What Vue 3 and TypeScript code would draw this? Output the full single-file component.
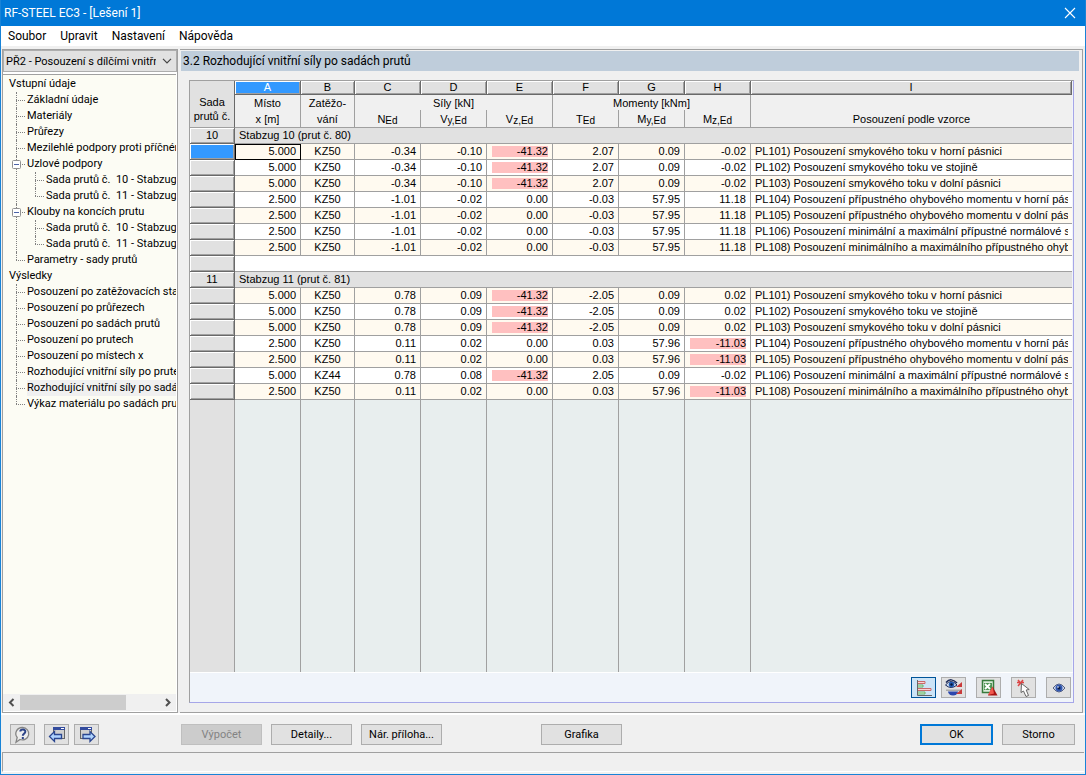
<script setup lang="ts">
interface Row {
  x: string
  lc: string
  n: string
  vy: string
  vz: string
  t: string
  my: string
  mz: string
  text: string
  hot?: 'vz' | 'mz'
}
interface TreeItem {
  label: string
  current?: boolean
  children?: string[]
}

const menus = ['Soubor', 'Upravit', 'Nastavení', 'Nápověda']

const tree: { label: string; items: TreeItem[] }[] = [
  {
    label: 'Vstupní údaje',
    items: [
      { label: 'Základní údaje' },
      { label: 'Materiály' },
      { label: 'Průřezy' },
      { label: 'Mezilehlé podpory proti příčnému posunu' },
      { label: 'Uzlové podpory', children: ['Sada prutů č.  10 - Stabzug 10', 'Sada prutů č.  11 - Stabzug 11'] },
      { label: 'Klouby na koncích prutu', children: ['Sada prutů č.  10 - Stabzug 10', 'Sada prutů č.  11 - Stabzug 11'] },
      { label: 'Parametry - sady prutů' },
    ],
  },
  {
    label: 'Výsledky',
    items: [
      { label: 'Posouzení po zatěžovacích stavech' },
      { label: 'Posouzení po průřezech' },
      { label: 'Posouzení po sadách prutů' },
      { label: 'Posouzení po prutech' },
      { label: 'Posouzení po místech x' },
      { label: 'Rozhodující vnitřní síly po prutech' },
      { label: 'Rozhodující vnitřní síly po sadách prutů', current: true },
      { label: 'Výkaz materiálu po sadách prutů' },
    ],
  },
]

const letters = ['A', 'B', 'C', 'D', 'E', 'F', 'G', 'H', 'I']

const texts: Record<number, string> = {
  101: 'Posouzení smykového toku v horní pásnici',
  102: 'Posouzení smykového toku ve stojině',
  103: 'Posouzení smykového toku v dolní pásnici',
  104: 'Posouzení přípustného ohybového momentu v horní pásnici',
  105: 'Posouzení přípustného ohybového momentu v dolní pásnici',
  106: 'Posouzení minimální a maximální přípustné normálové síly',
  108: 'Posouzení minimálního a maximálního přípustného ohybového momentu',
}

function row(code: number, values: string, hot?: 'vz' | 'mz'): Row {
  const [x, lc, n, vy, vz, t, my, mz] = values.split(' ')
  return { x, lc, n, vy, vz, t, my, mz, hot, text: `PL${code}) ${texts[code]}` }
}

const groups: { no: string; title: string; rows: Row[] }[] = [
  {
    no: '10',
    title: 'Stabzug 10 (prut č. 80)',
    rows: [
      row(101, '5.000 KZ50 -0.34 -0.10 -41.32 2.07 0.09 -0.02', 'vz'),
      row(102, '5.000 KZ50 -0.34 -0.10 -41.32 2.07 0.09 -0.02', 'vz'),
      row(103, '5.000 KZ50 -0.34 -0.10 -41.32 2.07 0.09 -0.02', 'vz'),
      row(104, '2.500 KZ50 -1.01 -0.02 0.00 -0.03 57.95 11.18'),
      row(105, '2.500 KZ50 -1.01 -0.02 0.00 -0.03 57.95 11.18'),
      row(106, '2.500 KZ50 -1.01 -0.02 0.00 -0.03 57.95 11.18'),
      row(108, '2.500 KZ50 -1.01 -0.02 0.00 -0.03 57.95 11.18'),
    ],
  },
  {
    no: '11',
    title: 'Stabzug 11 (prut č. 81)',
    rows: [
      row(101, '5.000 KZ50 0.78 0.09 -41.32 -2.05 0.09 0.02', 'vz'),
      row(102, '5.000 KZ50 0.78 0.09 -41.32 -2.05 0.09 0.02', 'vz'),
      row(103, '5.000 KZ50 0.78 0.09 -41.32 -2.05 0.09 0.02', 'vz'),
      row(104, '2.500 KZ50 0.11 0.02 0.00 0.03 57.96 -11.03', 'mz'),
      row(105, '2.500 KZ50 0.11 0.02 0.00 0.03 57.96 -11.03', 'mz'),
      row(106, '5.000 KZ44 0.78 0.08 -41.32 2.05 0.09 -0.02', 'vz'),
      row(108, '2.500 KZ50 0.11 0.02 0.00 0.03 57.96 -11.03', 'mz'),
    ],
  },
]
</script>

<template>
  <div class="window">
    <header class="titlebar">
      <h1>RF-STEEL EC3 - [Lešení 1]</h1>
      <button class="close" type="button" aria-label="Zavřít">
        <svg width="12" height="12" viewBox="0 0 12 12"><path d="M1 1l10 10M11 1L1 11" stroke="#fff" stroke-width="1.1" fill="none" /></svg>
      </button>
    </header>
    <nav class="menubar">
      <button v-for="m in menus" :key="m" type="button">{{ m }}</button>
    </nav>

    <div class="body">
      <aside class="side">
        <div class="combo">
          <select aria-label="Návrhový případ">
            <option>PŘ2 - Posouzení s dílčími vnitřními silami</option>
          </select>
          <svg width="10" height="6" viewBox="0 0 10 6"><path d="M1 .8l4 4 4-4" stroke="#444" stroke-width="1.200" fill="none" /></svg>
        </div>
        <div class="tree-box">
          <ul class="tree">
            <li v-for="g in tree" :key="g.label">
              <span class="node">{{ g.label }}</span>
              <ul>
                <li v-for="it in g.items" :key="it.label" class="branch">
                  <svg v-if="it.children" class="toggle" width="9" height="9" viewBox="0 0 9 9"><rect x=".5" y=".5" width="8" height="8" rx="1" fill="#fff" stroke="#919191" /><path d="M2 4.500h5" stroke="#4b63a7" /></svg>
                  <span class="node" :class="{ current: it.current }">{{ it.label }}</span>
                  <ul v-if="it.children">
                    <li v-for="c in it.children" :key="c" class="branch"><span class="node">{{ c }}</span></li>
                  </ul>
                </li>
              </ul>
            </li>
          </ul>
          <div class="hscroll">
            <svg width="17" height="15" viewBox="0 0 17 15"><path d="M10.500 4L7 7.500l3.500 3.500" stroke="#505050" stroke-width="2" fill="none" /></svg>
            <div class="track"><div class="thumb"></div></div>
            <svg width="17" height="15" viewBox="0 0 17 15"><path d="M7 4l3.500 3.500L7 11" stroke="#505050" stroke-width="2" fill="none" /></svg>
          </div>
        </div>
      </aside>

      <main class="main">
        <h2>3.2 Rozhodující vnitřní síly po sadách prutů</h2>
        <div class="panel">
          <div class="grid-area">
            <table>
              <colgroup>
                <col class="c-no" /><col class="c-a" /><col class="c-b" />
                <col v-for="i in 6" :key="i" class="c-v" />
                <col />
              </colgroup>
              <thead>
                <tr class="letters">
                  <th class="corner" rowspan="3">Sada<br />prutů č.</th>
                  <th v-for="l in letters" :key="l" :class="{ on: l === 'A' }">{{ l }}</th>
                </tr>
                <tr class="names top">
                  <th>Místo</th>
                  <th>Zatěžo-</th>
                  <th colspan="3">Síly [kN]</th>
                  <th colspan="3">Momenty [kNm]</th>
                  <th></th>
                </tr>
                <tr class="names bottom">
                  <th>x [m]</th>
                  <th>vání</th>
                  <th>N<small>Ed</small></th>
                  <th>V<small>y,Ed</small></th>
                  <th>V<small>z,Ed</small></th>
                  <th>T<small>Ed</small></th>
                  <th>M<small>y,Ed</small></th>
                  <th>M<small>z,Ed</small></th>
                  <th>Posouzení podle vzorce</th>
                </tr>
              </thead>
              <tbody v-for="(g, gi) in groups" :key="g.no">
                <tr class="group">
                  <th>{{ g.no }}</th>
                  <td colspan="9">{{ g.title }}</td>
                </tr>
                <tr v-for="(r, i) in g.rows" :key="i" :class="{ odd: i % 2 === 0 }">
                  <th :class="{ on: gi === 0 && i === 0 }"></th>
                  <td class="num" :class="{ focus: gi === 0 && i === 0 }">{{ r.x }}</td>
                  <td class="mid">{{ r.lc }}</td>
                  <td class="num">{{ r.n }}</td>
                  <td class="num">{{ r.vy }}</td>
                  <td class="num"><span :class="{ hot: r.hot === 'vz' }">{{ r.vz }}</span></td>
                  <td class="num">{{ r.t }}</td>
                  <td class="num">{{ r.my }}</td>
                  <td class="num"><span :class="{ hot: r.hot === 'mz' }">{{ r.mz }}</span></td>
                  <td class="text"><span>{{ r.text }}</span></td>
                </tr>
                <tr v-if="gi === 0" class="gap"><th></th><td colspan="9"></td></tr>
              </tbody>
            </table>
            <div class="rest"><i v-for="i in 10" :key="i"></i></div>
          </div>
          <div class="tools">
            <button type="button" class="tool active" aria-label="Barevné pruhy">
              <svg width="18" height="18" viewBox="0 0 18 18"><path d="M2.500 1v15.500H17" stroke="#666" fill="none" /><path d="M3 2.500h7v2H3M3 9.500h13v2H3" stroke="#c96a6a" fill="#f9d4d4" /><path d="M3 6h5v2H3M3 13h7v2H3" stroke="#6ab06a" fill="#d2f3d2" /></svg>
            </button>
            <button type="button" class="tool" aria-label="Zobrazit překročené hodnoty">
              <svg width="18" height="18" viewBox="0 0 18 18"><path d="M1 10.500h16v1.500H1z" fill="#aaa" /><path d="M3 12.500h10a5 4 0 0 1-10 0z" fill="#2c48ae" /><path d="M17 3v5h-6zM17 10v5h-6z" fill="#c93a3a" /><path d="M.5 6Q6-1 12 6 6 11 .5 6z" fill="#d5e3f5" stroke="#172655" /><circle cx="6.500" cy="5.500" r="2.800" fill="#245db5" /><circle cx="6.500" cy="5.500" r="1.200" fill="#071737" /><path d="M1 3.500Q6-2 12 4" stroke="#172655" stroke-width="1.500" fill="none" /></svg>
            </button>
            <button type="button" class="tool wide" aria-label="Export do Excelu">
              <svg width="18" height="18" viewBox="0 0 18 18"><rect x="2.500" y="1.500" width="11" height="12" fill="#d9ebd8" stroke="#377b3d" stroke-width="1.500" /><path d="M4 4h8v7H4z" fill="#4f9455" /><path d="M5 5l5 5M10 5l-5 5" stroke="#fff" stroke-width="1.800" /><path d="M12.500 7.500l5 9H8z" fill="#a81414" /><path d="M12.500 7.500l1.500 7L8 16z" fill="#f0584e" /></svg>
            </button>
            <button type="button" class="tool wide" aria-label="Vybrat v grafice">
              <svg width="18" height="18" viewBox="0 0 18 18"><path d="M3 1l5 6M8 1L3 7M2 3.500h7" stroke="#dc4646" stroke-width="1.500" /><path d="M6.500 4.500l-.5 9 2.500-1.500 2.500 5.500 2.500-1-2.300-5.500 3-.5z" fill="#fff" stroke="#666" /></svg>
            </button>
            <button type="button" class="tool wide" aria-label="Zobrazení">
              <svg width="18" height="18" viewBox="0 0 18 18"><path d="M3 9Q9 1 15 9 9 17 3 9z" fill="#c8d2e8" stroke="#555f80" /><circle cx="9" cy="9" r="3.500" fill="#3358b0" /><circle cx="9" cy="9" r="1.500" fill="#0c1c47" /><circle cx="8" cy="8" r=".8" fill="#fff" /></svg>
            </button>
          </div>
        </div>
      </main>
    </div>

    <footer class="actions">
      <button type="button" class="icon-btn help" aria-label="Nápověda">
        <svg width="20" height="18" viewBox="0 0 20 18"><path d="M9.500 1.500a6.500 6.200 0 1 1-2.500 12L3 16.200l1.200-4.700A6.500 6.200 0 0 1 9.500 1.500z" fill="#eee" stroke="#858585" stroke-width="1.300" /><path d="M7.300 5.500c.3-2.600 5.400-2.600 5 .3-.3 2-2.500 2-2.500 4" stroke="#2d4488" stroke-width="2" fill="none" /><rect x="8.800" y="11" width="2" height="2" fill="#2d4488" /></svg>
      </button>
      <button type="button" class="icon-btn" aria-label="Předchozí tabulka">
        <svg width="20" height="18" viewBox="0 0 20 18"><rect x="6.500" y="1.500" width="11" height="11" fill="#d0d0d0" stroke="#666" /><path d="M6 1h12v3H6z" fill="#344c9e" /><path d="M14 2h3v1h-3z" fill="#fff" /><path d="M2.500 10.500l5-5v3h7v4h-7v3z" fill="#b0d4ff" stroke="#2a4690" stroke-width="1.300" /></svg>
      </button>
      <button type="button" class="icon-btn" aria-label="Následující tabulka">
        <svg width="20" height="18" viewBox="0 0 20 18"><rect x="3.500" y="1.500" width="11" height="11" fill="#d0d0d0" stroke="#666" /><path d="M3 1h12v3H3z" fill="#344c9e" /><path d="M11 2h3v1h-3z" fill="#fff" /><path d="M18 10.500l-5-5v3H6v4h7v3z" fill="#b0d4ff" stroke="#2a4690" stroke-width="1.300" /></svg>
      </button>
      <div class="center">
        <button type="button" class="btn" disabled>Výpočet</button>
        <button type="button" class="btn">Detaily...</button>
        <button type="button" class="btn">Nár. příloha...</button>
        <button type="button" class="btn graphic">Grafika</button>
      </div>
      <div class="right">
        <button type="button" class="btn ok">OK</button>
        <button type="button" class="btn">Storno</button>
      </div>
    </footer>
    <div class="status"></div>
  </div>
</template>

<style>
html, body, #app { height: 100%; }
body { margin: 0; }
</style>

<style scoped>
* { box-sizing: border-box; }
.window {
  display: flex;
  flex-direction: column;
  height: 100%;
  overflow: hidden;
  border: 1px solid #1883d7;
  border-top: 0;
  background: #f0f0f0;
  color: #000;
  font: 11px/16px Roboto, Tahoma, sans-serif;
}
h1, h2, ul { margin: 0; padding: 0; font: inherit; list-style: none; }
button { margin: 0; padding: 0; font: inherit; color: inherit; }
.titlebar {
  display: flex;
  flex: none;
  align-items: center;
  justify-content: space-between;
  height: 26px;
  padding: 0 9px 0 3px;
  background: #0078d7;
  color: #fff;
  font-size: 12px;
}
.close { display: flex; border: 0; background: none; }
.menubar { display: flex; flex: none; gap: 14px; height: 20px; padding: 0 7px; background: #fff; font-size: 12px; }
.menubar button { border: 0; background: none; }

.body { display: flex; flex: 1; min-height: 0; padding: 3px 0 0 1px; }
.side {
  display: flex;
  flex: none;
  flex-direction: column;
  width: 176px;
  padding-bottom: 1px;
  border: 1px solid #a0a0a0;
  background: #fff;
}
.combo {
  display: flex;
  align-items: center;
  height: 22px;
  margin: 0 0 2px;
  padding-right: 4px;
  border: 1px solid #adadad;
  background: #e1e1e1;
}
.combo select {
  flex: 1;
  min-width: 0;
  height: 20px;
  padding: 2px 0 0 2px;
  border: 0;
  overflow: hidden;
  appearance: none;
  background: none;
  color: #000;
  font: inherit;
  text-overflow: clip;
}
.combo svg { flex: none; margin-left: 6px; }
.tree-box {
  display: flex;
  flex: 1;
  flex-direction: column;
  min-height: 0;
  margin-right: 1px;
  border-top: 1px solid #a0a0a0;
  background: #fcfcf4;
}
.tree { flex: 1; min-height: 0; overflow: hidden; padding-top: 1px; white-space: pre; }
.tree > li > .node { padding-left: 6px; }
.tree .node { display: block; height: 16px; }
.tree .branch { position: relative; padding-left: 24px; }
.branch .branch { padding-left: 19px; }
.branch::before { content: ""; position: absolute; left: 13px; top: 8px; width: 9px; border-top: 1px dotted #808080; }
.branch::after { content: ""; position: absolute; left: 13px; top: 0; bottom: 0; border-left: 1px dotted #808080; }
.branch:last-child::after { bottom: auto; height: 8px; }
.branch .branch::before, .branch .branch::after { left: 8px; }
.toggle { position: absolute; left: 9px; top: 4px; z-index: 1; }
.current { background: #f0f0f0; }
.hscroll { display: flex; flex: none; height: 17px; padding: 1px 0; background: #f0f0f0; align-items: center; }
.hscroll svg { flex: none; }
.track { flex: 1; }
.thumb { width: 76%; height: 15px; background: #cdcdcd; }

.main {
  display: flex;
  flex: 1;
  flex-direction: column;
  min-width: 0;
  margin: 0 2px;
  padding: 1px 3px 9px 1px;
  border: 1px solid #a0a0a0;
  border-left: 0;
}
.main h2 { flex: none; height: 20px; padding: 1px 2px; background: #bfcddb; font-size: 12px; line-height: 18px; }
.panel {
  display: flex;
  flex: 1;
  flex-direction: column;
  min-height: 0;
  margin: 9px 5px 0 8px;
  border: 1px solid #a0a0a0;
  border-right-color: #a6a6e8;
  border-bottom-color: #a6a6e8;
  background: #f0f4fa;
}
.grid-area { display: flex; flex: 1; flex-direction: column; min-height: 0; padding-right: 1px; overflow: hidden; }
table {
  flex: none;
  width: 100%;
  table-layout: fixed;
  border-collapse: separate;
  border-spacing: 0;
  font: 11px/15px "Liberation Sans", Arial, sans-serif;
}
.c-no { width: 45px; }
.c-a { width: 66px; }
.c-b { width: 54px; }
.c-v { width: 66px; }
th, td { padding: 0; border-right: 1px solid #a0a0a0; border-bottom: 1px solid #a0a0a0; font-weight: normal; }
tr > :last-child { border-right: 0; }
thead th { background: #f0f0f0; text-align: center; }
.corner { padding: 14px 0 0; vertical-align: top; line-height: 14px; }
thead .corner, tbody th { background: #e1e1e1; border-right: 1px solid #696969; }
.letters th:not(.corner) {
  height: 14px;
  background: #e1e1e1;
  border-right: 1px solid #696969;
  border-bottom: 1px solid #696969;
  box-shadow: inset 1px 1px #fff, inset -1px -1px #a0a0a0;
  line-height: 13px;
}
.letters th.on:not(.corner) { background: #3399ff; color: #fff; }
.names.top th { height: 15px; border-bottom: 0; line-height: 14px; }
.names.bottom th { height: 18px; line-height: 16px; }
small { font-size: 10px; vertical-align: -1px; line-height: 10px; }
tbody th, tbody td { height: 16px; line-height: 15px; }
tbody th { border-bottom-color: #696969; box-shadow: inset 1px 1px #fff, inset -1px -1px #a0a0a0; }
tbody th.on { background: #3399ff; }
.group td { padding-left: 4px; background: #e1e1e1; }
tbody td { background: #fff; }
tr.group td { background: #e1e1e1; }
tr.odd td { background: #fffaf0; }
td.num { padding-right: 4px; text-align: right; }
.num span { display: block; height: 11px; margin-left: 5px; line-height: 11px; }
.num .hot { background: #ffc0c0; }
.focus { outline: 1px solid #000; outline-offset: -1px; }
.mid { text-align: center; }
td.text { padding: 0 4px; }
.text span { display: block; overflow: hidden; white-space: nowrap; }
.rest { display: grid; flex: 1; grid-template-columns: 45px 66px 54px repeat(6, 66px) 1fr; background: #e8eeee; }
.rest i { border-right: 1px solid #a0a0a0; }
.rest i:first-child { background: #e1e1e1; }
.rest i:last-child { border-right: 0; }
.tools { display: flex; flex: none; justify-content: flex-end; align-items: flex-start; gap: 5px; height: 30px; padding: 4px 2px 0; border-top: 1px solid #fff; }
.tool, .icon-btn { display: flex; align-items: center; justify-content: center; width: 25px; height: 21px; border: 1px solid #adadad; background: #e1e1e1; }
.tool.wide { margin-left: 5px; }
.tool.active { border-color: #005499; background: #cce4f7; }

.actions { display: flex; flex: none; height: 39px; padding: 9px 10px 0 9px; border-top: 2px solid #fff; }
.icon-btn { margin-right: 5px; }
.icon-btn.help { margin-right: 9px; }
.center { display: flex; gap: 9px; margin-left: 77px; }
.btn { width: 81px; height: 21px; border: 1px solid #adadad; background: #e1e1e1; line-height: 19px; }
.btn:disabled { border-color: #bfbfbf; background: #cccccc; color: #838383; }
.graphic { margin-left: 90px; }
.right { display: flex; gap: 9px; margin-left: auto; }
.right .btn { width: 73px; }
.right .ok { border: 2px solid #0078d7; line-height: 17px; }
.status { flex: none; height: 20px; margin: 0 1px 2px; border: solid #a0a0a0; border-width: 1px 0 1px 1px; border-bottom-color: #fff; }
</style>
